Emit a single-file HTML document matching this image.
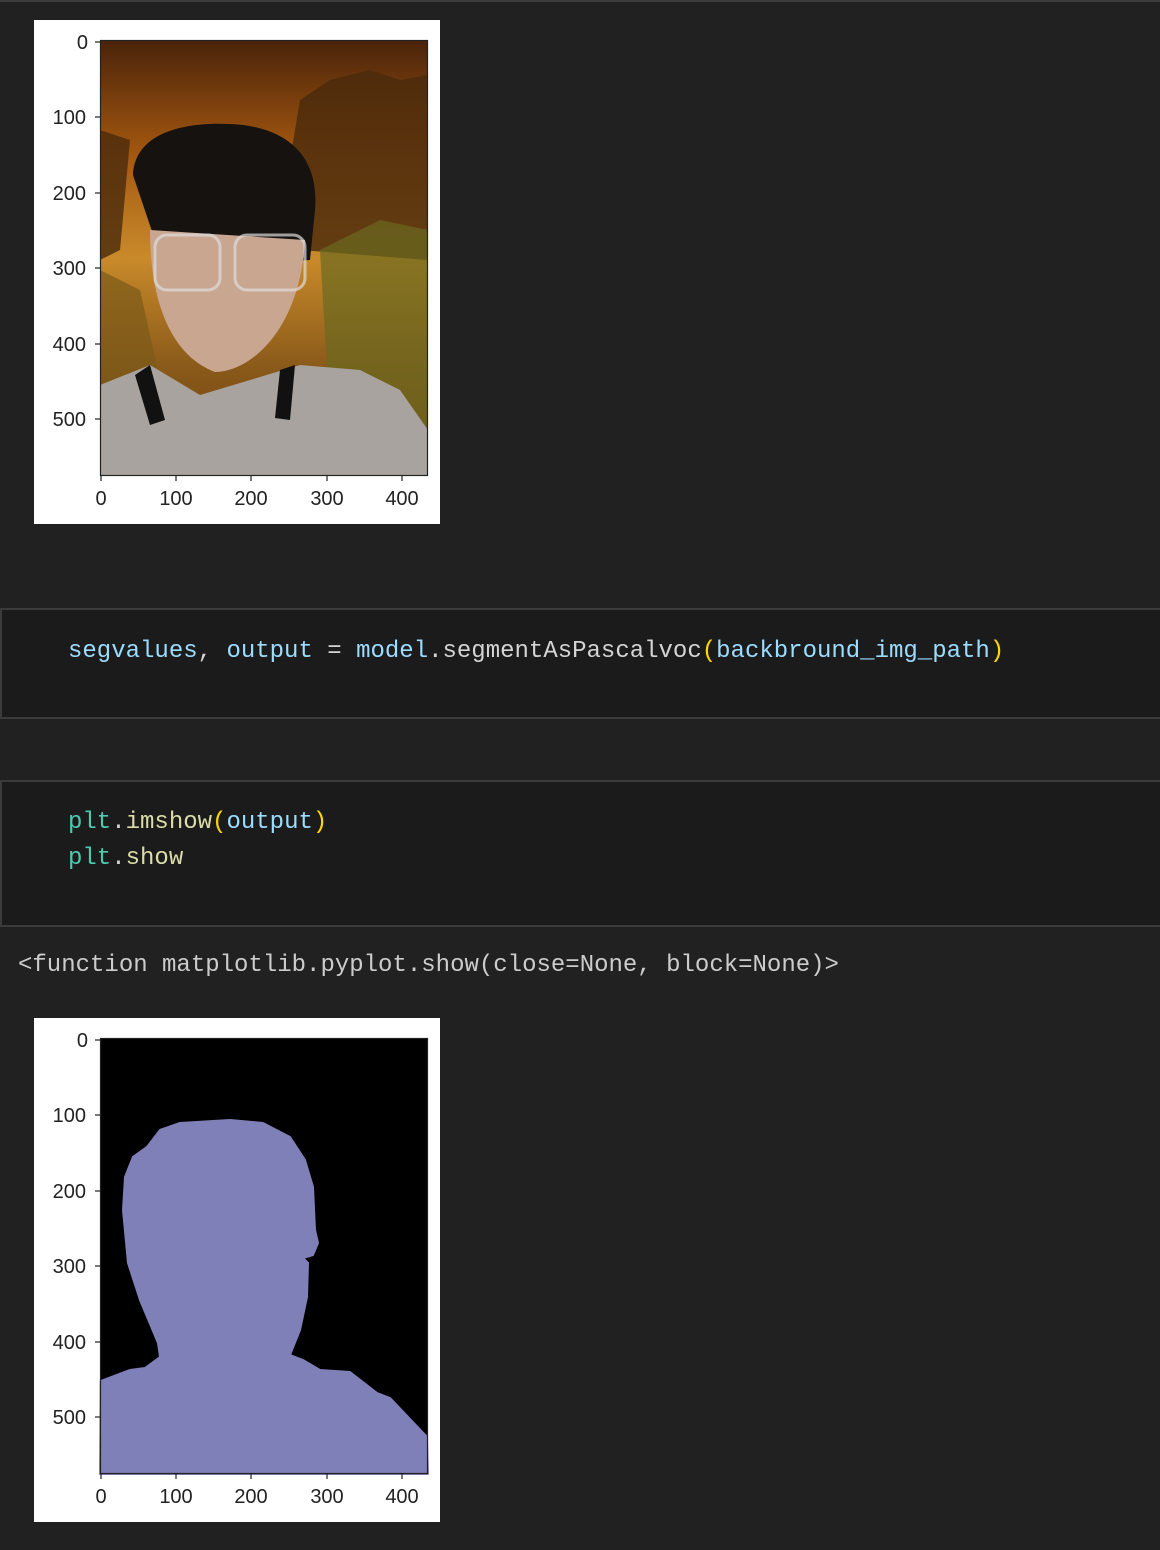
<!DOCTYPE html>
<html><head><meta charset="utf-8"><style>
html,body{margin:0;padding:0;background:#212121;width:1160px;height:1550px;overflow:hidden;position:relative}
.t{position:absolute;font-family:"Liberation Mono","DejaVu Sans Mono",monospace;font-size:24px;line-height:36px;white-space:pre;color:#d4d4d4}
.cell{position:absolute;left:0;width:1160px;background:#1b1b1b;border:2px solid #3b3b3b;border-right:none;box-sizing:border-box}
.b{color:#9cdcfe}.g{color:#4ec9b0}.y{color:#dcdcaa}.p{color:#ffd700}
svg text{font-family:"Liberation Sans","DejaVu Sans",sans-serif;font-size:20px;fill:#222}
</style></head><body>
<div style="position:absolute;left:0;top:0;width:1160px;height:2px;background:#3b3b3b"></div>

<svg style="position:absolute;left:34px;top:20px" width="406" height="504" viewBox="34 20 406 504">
<defs>
<linearGradient id="sky" x1="0" y1="0" x2="0" y2="1">
<stop offset="0" stop-color="#4a230a"/><stop offset="0.25" stop-color="#a0550f"/><stop offset="0.5" stop-color="#c98a2a"/><stop offset="0.75" stop-color="#8a5a1a"/><stop offset="1" stop-color="#6a3a10"/></linearGradient>
</defs>
<rect x="34" y="20" width="406" height="504" fill="#fff"/>
<rect x="100" y="40" width="328" height="436" fill="url(#sky)"/>
<path d="M290 160 L300 100 L330 80 L370 70 L400 80 L428 75 L428 260 L300 250 Z" fill="#4a2a0c" opacity="0.8"/>
<path d="M100 130 L130 140 L120 250 L100 260Z" fill="#4a2a0c" opacity="0.8"/>
<path d="M320 250 L380 220 L428 230 L428 430 L330 420 Z" fill="#6b6a20" opacity="0.7"/>
<path d="M100 270 L140 290 L160 380 L100 400Z" fill="#7a5a18" opacity="0.7"/>
<path d="M133 175 C135 130 190 122 230 124 C280 126 320 150 315 210 L310 260 L165 270 Z" fill="#151210"/>
<path d="M150 230 C150 300 170 355 215 372 C250 372 300 330 305 240 Z" fill="#c9a690"/>
<rect x="155" y="235" width="65" height="55" rx="12" fill="none" stroke="#ddd" stroke-width="3" opacity="0.7"/>
<rect x="235" y="235" width="70" height="55" rx="12" fill="none" stroke="#ddd" stroke-width="3" opacity="0.7"/>
<path d="M100 385 L150 365 L200 395 L250 380 L300 365 L360 370 L400 390 L428 430 L428 476 L100 476Z" fill="#a8a39e"/>
<path d="M135 375 L150 365 L165 420 L150 425Z" fill="#111"/>
<path d="M280 370 L295 365 L290 420 L275 418Z" fill="#111"/>
<rect x="100.5" y="40.5" width="327" height="435" fill="none" stroke="#222" stroke-width="1.2"/>
<g stroke="#222" stroke-width="1.2">
<line x1="95" y1="42" x2="100" y2="42"/><line x1="95" y1="117" x2="100" y2="117"/><line x1="95" y1="193" x2="100" y2="193"/><line x1="95" y1="268" x2="100" y2="268"/><line x1="95" y1="344" x2="100" y2="344"/><line x1="95" y1="419" x2="100" y2="419"/>
<line x1="101" y1="476" x2="101" y2="481"/><line x1="176" y1="476" x2="176" y2="481"/><line x1="251" y1="476" x2="251" y2="481"/><line x1="327" y1="476" x2="327" y2="481"/><line x1="402" y1="476" x2="402" y2="481"/>
</g>
<g text-anchor="end"><text x="88" y="49">0</text><text x="86" y="124">100</text><text x="86" y="200">200</text><text x="86" y="275">300</text><text x="86" y="351">400</text><text x="86" y="426">500</text></g>
<g text-anchor="middle"><text x="101" y="505">0</text><text x="176" y="505">100</text><text x="251" y="505">200</text><text x="327" y="505">300</text><text x="402" y="505">400</text></g>
</svg>

<div class="cell" style="top:608px;height:111px"></div>
<div class="t" style="left:68px;top:634px"><span class="b">segvalues</span>, <span class="b">output</span> = <span class="b">model</span>.segmentAsPascalvoc<span class="p">(</span><span class="b">backbround_img_path</span><span class="p">)</span></div>

<div class="cell" style="top:780px;height:147px"></div>
<div class="t" style="left:68px;top:805px"><span class="g">plt</span>.<span class="y">imshow</span><span class="p">(</span><span class="b">output</span><span class="p">)</span>
<span class="g">plt</span>.<span class="y">show</span></div>

<div class="t" style="left:18px;top:948px;color:#cccccc">&lt;function matplotlib.pyplot.show(close=None, block=None)&gt;</div>

<svg style="position:absolute;left:34px;top:1018px" width="406" height="504" viewBox="34 1018 406 504">
<rect x="34" y="1018" width="406" height="504" fill="#fff"/>
<rect x="100" y="1038" width="328" height="436" fill="#000"/>
<path d="M100.7 1381 L130 1370 L145 1368 L160 1357 L158 1343 L140 1300 L128 1263 L123 1210 L125 1177 L133 1157 L147 1147 L160 1130 L180 1123 L230 1120 L263 1123 L290 1137 L305 1160 L313 1187 L315 1230 L318 1243 L313 1255 L303 1258 L308 1263 L307 1297 L300 1330 L290 1355 L303 1360 L320 1370 L350 1372 L377 1393 L390 1398 L427 1437 L428 1474 L100 1474 Z" fill="#8080b8" stroke="#8080b8" stroke-width="2" stroke-linejoin="round"/>
<rect x="100.5" y="1038.5" width="327" height="435" fill="none" stroke="#222" stroke-width="1.2"/>
<g stroke="#222" stroke-width="1.2">
<line x1="95" y1="1040" x2="100" y2="1040"/><line x1="95" y1="1115" x2="100" y2="1115"/><line x1="95" y1="1191" x2="100" y2="1191"/><line x1="95" y1="1266" x2="100" y2="1266"/><line x1="95" y1="1342" x2="100" y2="1342"/><line x1="95" y1="1417" x2="100" y2="1417"/>
<line x1="101" y1="1474" x2="101" y2="1479"/><line x1="176" y1="1474" x2="176" y2="1479"/><line x1="251" y1="1474" x2="251" y2="1479"/><line x1="327" y1="1474" x2="327" y2="1479"/><line x1="402" y1="1474" x2="402" y2="1479"/>
</g>
<g text-anchor="end"><text x="88" y="1047">0</text><text x="86" y="1122">100</text><text x="86" y="1198">200</text><text x="86" y="1273">300</text><text x="86" y="1349">400</text><text x="86" y="1424">500</text></g>
<g text-anchor="middle"><text x="101" y="1503">0</text><text x="176" y="1503">100</text><text x="251" y="1503">200</text><text x="327" y="1503">300</text><text x="402" y="1503">400</text></g>
</svg>
</body></html>
